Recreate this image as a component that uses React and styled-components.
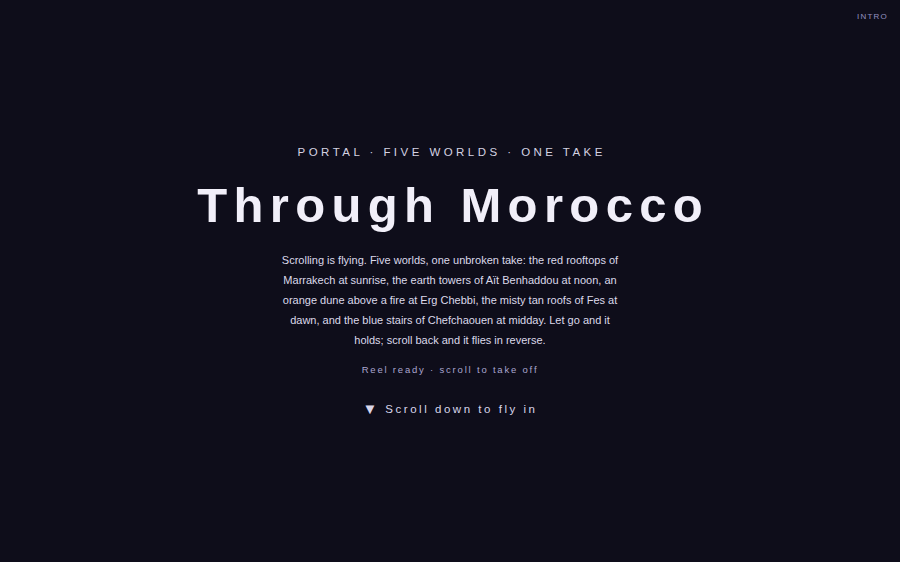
import React from "react";
import styled, { createGlobalStyle } from "styled-components";

const GlobalStyle = createGlobalStyle`
  html, body {
    margin: 0;
    padding: 0;
    background: #0e0d1a;
  }
  * {
    box-sizing: border-box;
  }
`;

const Page = styled.div`
  position: relative;
  width: 100%;
  height: 562px;
  background: #0e0d1a;
  display: flex;
  align-items: center;
  justify-content: center;
  font-family: "Liberation Sans", Arial, sans-serif;
`;

const SectionTag = styled.div`
  position: absolute;
  top: 12px;
  right: 12px;
  font-size: 8px;
  letter-spacing: 0.15em;
  color: #9390c0;
`;

const Hero = styled.main`
  display: flex;
  flex-direction: column;
  align-items: center;
  text-align: center;
`;

const Kicker = styled.div`
  font-size: 11.5px;
  letter-spacing: 0.3em;
  color: #d4d2e2;
  margin-right: -0.3em;
`;

const Title = styled.h1`
  margin: 21px 0 0;
  font-size: 49px;
  font-weight: 700;
  letter-spacing: 0.13em;
  margin-right: -0.13em;
  color: #f1eff9;
  line-height: 1.1;
`;

const Lede = styled.p`
  margin: 18px 0 0;
  max-width: 340px;
  font-size: 11px;
  line-height: 20px;
  color: #dcd9ea;
`;

const Status = styled.div`
  margin-top: 14px;
  font-size: 9.5px;
  letter-spacing: 0.19em;
  color: #aaa6cf;
`;

const Cue = styled.div`
  margin-top: 26px;
  display: flex;
  align-items: center;
  gap: 8px;
  font-size: 11.5px;
  letter-spacing: 0.22em;
  color: #d8d6ea;
`;

const Arrow = styled.span`
  font-size: 15px;
  line-height: 1;
  letter-spacing: 0;
`;

export default function App() {
  return (
    <>
      <GlobalStyle />
      <Page>
        <SectionTag>INTRO</SectionTag>
        <Hero>
          <Kicker>PORTAL · FIVE WORLDS · ONE TAKE</Kicker>
          <Title>Through Morocco</Title>
          <Lede>
            Scrolling is flying. Five worlds, one unbroken take: the red rooftops
            of Marrakech at sunrise, the earth towers of Aït Benhaddou at noon,
            an orange dune above a fire at Erg Chebbi, the misty tan roofs of Fes
            at dawn, and the blue stairs of Chefchaouen at midday. Let go and it
            holds; scroll back and it flies in reverse.
          </Lede>
          <Status>Reel ready · scroll to take off</Status>
          <Cue>
            <Arrow>▼</Arrow>
            Scroll down to fly in
          </Cue>
        </Hero>
      </Page>
    </>
  );
}
